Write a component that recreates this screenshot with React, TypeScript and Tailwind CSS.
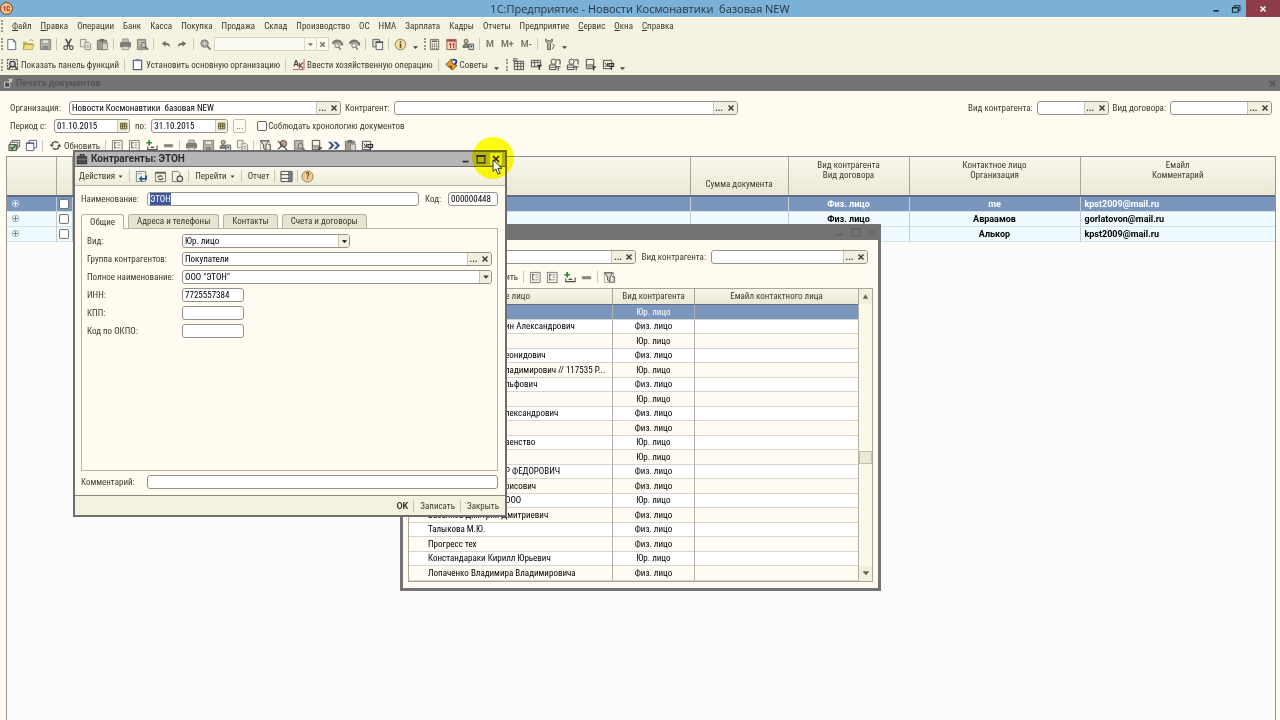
import React from "react";
import clsx from "clsx";

const icons: Record<string, React.ReactNode> = {
  file: (
    <>
      <path d="M3 1.5h6l2.5 2.5v8.5H3z" fill="#fff" stroke="#5f6b80" />
      <path d="M9 1.5V4h2.5" fill="none" stroke="#5f6b80" />
    </>
  ),
  open: (
    <>
      <path d="M1 4h4l1 1.5h6V12H1z" fill="#c9b45c" />
      <path d="M3 7h10l-2 5.5H1z" fill="#f0dc84" stroke="#a08c40" strokeWidth=".6" />
      <path d="M8 3c2-2 3-1 4 .5" fill="none" stroke="#8a8a6a" />
    </>
  ),
  save: (
    <>
      <path d="M1.5 1.5h11v11h-11z" fill="#b4b4aa" stroke="#7c7c74" />
      <path d="M3.5 2h7v4h-7z" fill="#e4e4d8" stroke="#7c7c74" strokeWidth=".6" />
      <path d="M4 8.5h6v4H4z" fill="#8a8a82" />
    </>
  ),
  cut: (
    <>
      <path d="M4 1l4.5 8M10 1L5.5 9" stroke="#444" strokeWidth="1.6" fill="none" />
      <circle cx="4" cy="10.5" r="2" fill="none" stroke="#555" strokeWidth="1.3" />
      <circle cx="10" cy="10.5" r="2" fill="none" stroke="#555" strokeWidth="1.3" />
    </>
  ),
  copy: (
    <>
      <path d="M1.5 1.5h6v8h-6z" fill="#ecebdf" stroke="#8c8c84" />
      <path d="M6.5 4.5h4l2 2v6h-6z" fill="#ecebdf" stroke="#8c8c84" />
      <path d="M8 8h3M8 10h3" stroke="#9c9c94" />
    </>
  ),
  paste: (
    <>
      <path d="M1.5 2.5h10v10h-10z" fill="#9c9c94" stroke="#74746c" />
      <path d="M4 1h5v3H4z" fill="#6c6c66" />
      <path d="M7 5.5h5.5v7H7z" fill="#d4d4ca" stroke="#8c8c84" />
    </>
  ),
  print: (
    <>
      <path d="M4 1h6v4H4z" fill="#c4c4bc" stroke="#777" strokeWidth=".7" />
      <path d="M1 6c0-1 1-2 2-2h8c1 0 2 1 2 2v4H1z" fill="#7e7e78" />
      <path d="M3.5 9h7v3.5h-7z" fill="#d8d8cc" stroke="#777" strokeWidth=".7" />
    </>
  ),
  preview: (
    <>
      <path d="M1.5 1.5h9v11h-9z" fill="#a4a49c" stroke="#84847c" />
      <path d="M3 4h5M3 6h4M3 8h4" stroke="#d8d8cc" />
      <circle cx="8" cy="7.5" r="2.7" fill="#c4c4bc" stroke="#666" />
      <path d="M10 9.5l3 3" stroke="#666" strokeWidth="1.6" />
    </>
  ),
  undo: <path d="M3 6l4-3v2c3 0 5 1 5 5-1-2-3-2.5-5-2.5V9.5z" fill="#6f6f68" />,
  redo: <path d="M11 6L7 3v2c-3 0-5 1-5 5 1-2 3-2.5 5-2.5V9.5z" fill="#6f6f68" />,
  find: (
    <>
      <circle cx="6" cy="6" r="4" fill="#a8a8a0" stroke="#77776f" />
      <path d="M9 9l3.5 3.5" stroke="#77776f" strokeWidth="2" />
      <path d="M4 6h4M6 4v4" stroke="#deded4" />
    </>
  ),
  findNext: (
    <>
      <path d="M1 6c1-5 9-6 11-1l1-1v4H9.5l1.2-1.2C9 3.5 4 4 3 7z" fill="#77776f" />
      <circle cx="6.5" cy="8" r="2.5" fill="#e0e0d4" stroke="#77776f" />
      <path d="M8.5 10l2 2.5" stroke="#77776f" strokeWidth="1.5" />
    </>
  ),
  windows: (
    <>
      <path d="M2 1.500h7v8H2z" fill="#dcdccf" stroke="#55606e" />
      <path d="M5.500 4.500h7v8h-7z" fill="#f6f5ea" stroke="#55606e" />
      <path d="M5 4.500h8" stroke="#444" strokeWidth="1.500" />
    </>
  ),
  info: (
    <>
      <circle cx="7" cy="7" r="5.7" fill="#f4dfa0" stroke="#8b7a4c" />
      <path d="M7 6v4.5M7 3.300v1.500" stroke="#4d4327" strokeWidth="1.6" />
    </>
  ),
  calc: (
    <>
      <path d="M2.500 1.500h9v11h-9z" fill="#eceadb" stroke="#6f6f60" />
      <path d="M4 3.500h6" stroke="#55554a" strokeWidth="1.500" />
      <path d="M4 6.500h6M4 8.700h6M4 11h6" stroke="#55554a" strokeWidth="1.200" strokeDasharray="1.300 1" />
    </>
  ),
  calendar: (
    <>
      <path d="M2 1.500h10v11H2z" fill="#f2dcc4" stroke="#8a5a44" />
      <path d="M2 3h10" stroke="#aa5040" strokeWidth="2" />
      <path d="M4.500 7L6 6v5M8 7l1.500-1v5" stroke="#b13a2c" fill="none" strokeWidth="1.200" />
    </>
  ),
  users: (
    <>
      <circle cx="4.500" cy="3.500" r="2.200" fill="#c9b48c" stroke="#666" />
      <path d="M1 10c0-5 7-5 7 0z" fill="#8a8a7c" stroke="#555" />
      <path d="M7.500 6.500h5v6h-5z" fill="#d6dce6" stroke="#555" />
      <circle cx="10" cy="9" r="1.200" fill="#555" />
    </>
  ),
  wrench: (
    <>
      <path d="M3 1v3l2 2v6.500h3V6l2-2V1L8 3H5z" fill="#b9b7a4" stroke="#5c5c50" />
      <path d="M10 6l2 2-2 4" stroke="#5c5c50" fill="none" />
    </>
  ),
  panel: (
    <>
      <path d="M1.500 1.500h11v11h-11z" fill="#e2e2d4" stroke="#444" strokeDasharray="2 1" />
      <circle cx="7" cy="6.500" r="3" fill="#c8ccd4" stroke="#333" strokeWidth="1.300" />
      <path d="M9 8.500l3.500 4M3 12l2-3" stroke="#333" strokeWidth="1.500" />
    </>
  ),
  org: (
    <>
      <path d="M2.500 2.500h9v10h-9z" fill="#fff" stroke="#55668a" strokeWidth="1.300" />
      <path d="M5 1h4v2.500H5z" fill="#7c88a0" />
    </>
  ),
  entry: (
    <>
      <path d="M1 12.500h12V1" fill="none" stroke="#b06060" />
      <path d="M2 9l2-6h1l1.500 6M2.500 7h3" stroke="#444" strokeWidth="1.300" fill="none" />
      <path d="M8 5v6M12 5L8.500 8l3.500 3" stroke="#8c3c3c" strokeWidth="1.300" fill="none" />
    </>
  ),
  tips: (
    <>
      <path d="M1 7l6-6 1 5 5 2-5 5z" fill="#e2a030" stroke="#7c4c18" />
      <path d="M8 2c3-1 5 1 4 3l-2 2" stroke="#2c3e90" strokeWidth="2" fill="none" />
      <path d="M4 8l4 1-1 3z" fill="#b03020" />
    </>
  ),
  pin: (
    <>
      <path d="M3 6h6v6H3z" fill="#4c4c4c" stroke="#ddd" />
      <path d="M8 2l4 4M12 2L8 6" stroke="#e8e0a0" strokeWidth="1.300" />
    </>
  ),
  ledger: (
    <>
      <path d="M2.500 3.500h10v9h-10z" fill="#f4f3e6" stroke="#444" />
      <path d="M2.500 6h10M2.500 9h10M6 3.500v9M9.500 3.500v9" stroke="#555" />
      <path d="M1 1h5M1 3h4" stroke="#444" />
    </>
  ),
  ledgerT: (
    <>
      <path d="M1.500 2.500h10v7h-10z" fill="#f4f3e6" stroke="#444" />
      <path d="M1.500 5h10M5 2.500v7M8 2.500v3" stroke="#555" />
      <path d="M7.500 8h5M10 8v5" stroke="#333" strokeWidth="1.400" />
    </>
  ),
  ledgerO: (
    <>
      <path d="M1.500 7.500h7v5h-7z" fill="#f4f3e6" stroke="#444" />
      <path d="M1.500 10h7" stroke="#555" />
      <circle cx="6" cy="4" r="2.800" fill="#f4f3e6" stroke="#444" />
      <path d="M8.500 9.500h5M11 9.500v4M9 2h4v5" stroke="#333" fill="none" />
    </>
  ),
  sheetT: (
    <>
      <path d="M2.500 1.500h8v10h-8z" fill="#f4f3e6" stroke="#444" />
      <path d="M2.500 7.500h8M4 9.500h3" stroke="#444" />
      <path d="M8 9.500h5M10.500 9.500v4" stroke="#333" strokeWidth="1.300" />
    </>
  ),
  sheetP: (
    <>
      <path d="M1.500 2.500h9v9h-9z" fill="#f4f3e6" stroke="#444" />
      <path d="M3 5l3 4M6 5v4M3 9h2" stroke="#333" />
      <path d="M7.500 6h5v3h-5zM10 9v4" stroke="#333" fill="none" strokeWidth="1.200" />
    </>
  ),
  docsOk: (
    <>
      <path d="M4.500 1.500h8v7h-8z" fill="#fff" stroke="#555" />
      <path d="M2.500 3.500h8v7h-8z" fill="#fff" stroke="#555" />
      <path d="M1 6h8v6.500H1z" fill="#b9c8b4" stroke="#444" />
      <path d="M2.500 8.500l2 2.500 4-5" stroke="#2e7a2a" strokeWidth="1.700" fill="none" />
    </>
  ),
  docs: (
    <>
      <path d="M4.500 1.500h8v8h-8z" fill="#fff" stroke="#55607c" />
      <path d="M1.500 4.500h8v8h-8z" fill="#fff" stroke="#55607c" />
      <path d="M1 4.500h9" stroke="#55607c" strokeWidth="1.500" />
    </>
  ),
  refresh: (
    <>
      <path d="M3 6a4 4 0 0 1 7-1.500M11 8a4 4 0 0 1-7 1.500" stroke="#55553c" strokeWidth="1.500" fill="none" />
      <path d="M.5 6h5L3 9zM8.500 8h5L11 5z" fill="#55553c" />
    </>
  ),
  list: (
    <>
      <path d="M1.500 1.500h10.500v11H1.500z" fill="#f8f7ee" stroke="#77776c" />
      <path d="M4 3v7M4 4h2M4 9.500h2" stroke="#55554c" />
      <path d="M7 4h3M7 6.500h3M7 9.500h3" stroke="#8a8a80" />
    </>
  ),
  add: (
    <>
      <path d="M4.500 1v6M1.500 4h6" stroke="#2e8a2a" strokeWidth="1.800" />
      <path d="M3 8v3.500h10V7" stroke="#4c4c3c" strokeWidth="1.200" fill="none" />
      <path d="M6 9h4" stroke="#4c4c3c" strokeWidth="1.500" />
    </>
  ),
  minus: <path d="M2.500 6h9v2.500h-9z" fill="#8c8c80" stroke="#66665c" strokeWidth=".6" />,
  filter: (
    <>
      <path d="M1.500 1.500h10v11h-10z" fill="#f4f3e6" stroke="#b0b0a4" />
      <path d="M1.500 2h9L7.500 6.500V12l-2.500-2V6.500z" fill="#dcdccf" stroke="#444" />
      <path d="M9.500 6h3v6h-4" stroke="#666" fill="none" />
    </>
  ),
  filterOff: (
    <>
      <circle cx="8" cy="5" r="3.500" fill="#c4a090" stroke="#444" />
      <path d="M2 2l10 10M2 11l5-4" stroke="#555" strokeWidth="1.400" />
    </>
  ),
  arrows: <path d="M1 3h3l4 4-4 4H1l4-4zM7 3h3l4 4-4 4H7l4-4z" fill="#34508a" />,
  saveIn: (
    <>
      <path d="M1.500 1.500h10v11h-10z" fill="#f0f0ea" stroke="#77808c" />
      <path d="M3 4h4" stroke="#8a96a8" />
      <path d="M4 9.500L7.500 6v2.500h3.500V6h2v4.500H7.500V13z" fill="#2c5a92" />
    </>
  ),
  reread: (
    <>
      <path d="M1.500 2.500h11v10h-11z" fill="#f0f0e4" stroke="#77776c" />
      <path d="M1.500 3h11" stroke="#66665c" strokeWidth="2" />
      <path d="M4 8a3 2.500 0 0 1 5-1M10 8.500a3 2.500 0 0 1-5 1" stroke="#444" strokeWidth="1.300" fill="none" />
    </>
  ),
  based: (
    <>
      <path d="M1.500 1.500h6l2 2v9h-8z" fill="#f4f4ec" stroke="#77776c" />
      <circle cx="9.500" cy="9.500" r="3" fill="#e8e8dc" stroke="#555" strokeWidth="1.300" />
      <path d="M9.500 5v2.500" stroke="#555" />
    </>
  ),
  report: (
    <>
      <path d="M1 1.500h12v11H1z" fill="#f6f5ea" stroke="#44444a" />
      <path d="M1 5h12M1 9h12M9.500 1.500v11" stroke="#44444a" />
      <path d="M10 2h3v10h-3z" fill="#77777c" />
    </>
  ),
  help: <circle cx="7" cy="7" r="6" fill="#efcf96" stroke="#94784c" />,
  grid: (
    <>
      <path d="M2 3h9v8H2z" fill="#fff" />
      <path d="M2 3h9v8H2zM2 5.500h9M2 8h9M5 3v8M8 3v8" stroke="#5f5420" strokeWidth="1.300" fill="none" />
    </>
  ),
  expand: (
    <>
      <circle cx="7" cy="7" r="3.500" fill="none" stroke="currentColor" strokeWidth=".6" />
      <path d="M4.500 7h5M7 4.500v5" stroke="currentColor" />
    </>
  ),
  briefcase: (
    <>
      <path d="M5 4V2h4v2" fill="none" stroke="#333" strokeWidth="1.500" />
      <path d="M1.500 4h11v8.500h-11z" fill="#4c4c4c" stroke="#2c2c2c" />
      <path d="M1.500 7.500h11" stroke="#7c7c7c" />
    </>
  ),
  x: <path d="M3.500 3.500l7 7M10.500 3.500l-7 7" stroke="currentColor" strokeWidth="2" />,
  down: <path d="M3 5h8L7 9.500z" fill="currentColor" />,
  up: <path d="M3.500 10L7 4l3.500 6z" fill="currentColor" />,
  min: <path d="M3 10h7" stroke="currentColor" strokeWidth="2" />,
  max: (
    <>
      <path d="M2.500 3h9v8.500h-9z" fill="none" stroke="currentColor" strokeWidth="1.300" />
      <path d="M2 3.500h10" stroke="currentColor" strokeWidth="2" />
    </>
  ),
  restore: (
    <path d="M4.500 5V2.500h8V9h-2M2 5h8v6.500H2zM2 5.500h8" fill="none" stroke="currentColor" strokeWidth="1.500" />
  ),
};

function Icon({ name, className = "h-[13px] w-[13px]" }: { name: string; className?: string }) {
  return (
    <svg viewBox="0 0 14 14" className={clsx("shrink-0", className)} aria-hidden="true">
      {icons[name]}
    </svg>
  );
}

function IconButton({ name, label }: { name: string; label: string }) {
  return (
    <button aria-label={label} className="flex h-[16px] w-[17px] shrink-0 items-center justify-center">
      <Icon name={name} />
    </button>
  );
}

const Sep = () => <div className="mr-[3px] ml-[2px] h-[12px] w-px shrink-0 bg-[#c9c7b4]" />;

const Grip = () => <div className="h-[12px] w-[2px] shrink-0 border-l-2 border-dotted border-[#9a9888]" />;

const More = () => (
  <button aria-label="Ещё" className="mr-[3px] flex h-[16px] w-[12px] shrink-0 items-end justify-center text-[#44443a]">
    <Icon name="down" className="h-[9px] w-[9px]" />
  </button>
);

function TextButton({ icon, children }: { icon?: string; children: React.ReactNode }) {
  return (
    <button className="flex h-[16px] shrink-0 items-center gap-[2px] px-[3px] whitespace-nowrap">
      {icon && <Icon name={icon} />}
      {children}
    </button>
  );
}

interface FieldProps {
  id: string;
  label?: string;
  value?: string;
  className?: string;
  buttons?: string[];
  selected?: boolean;
}

// Text box with its label and the small buttons built into its right edge
function Field({ id, label, value = "", className, buttons = [], selected }: FieldProps) {
  return (
    <>
      {label && (
        <label htmlFor={id} className="shrink-0 whitespace-nowrap">
          {label}
        </label>
      )}
      <div
        className={clsx(
          "flex h-[14px] overflow-hidden rounded-[3px] border border-[#96948a] bg-white text-black",
          className,
        )}
      >
        <input
          id={id}
          defaultValue={value}
          autoFocus={selected}
          onFocus={(e) => selected && e.currentTarget.select()}
          className="w-full min-w-0 flex-1 bg-transparent pl-[2px] outline-none selection:bg-[#40569c] selection:text-white"
        />
        {buttons.map((b, i) => (
          <button
            key={b}
            aria-label={`${b}: ${label ?? id}`}
            className={clsx(
              "flex w-[12px] shrink-0 items-center justify-center bg-[#f1f0e0] text-[#3c3c30]",
              i === 0 && "border-l border-[#c9c7b4]",
            )}
          >
            {b === "select" ? <span className="leading-none font-bold">...</span> : <Icon name={b} className="h-[10px] w-[10px]" />}
          </button>
        ))}
      </div>
    </>
  );
}

const menu = [
  "Файл", "Правка", "Операции", "Банк", "Касса", "Покупка", "Продажа", "Склад", "Производство",
  "ОС", "НМА", "Зарплата", "Кадры", "Отчеты", "Предприятие", "Сервис", "Окна", "Справка",
];
const underlined = ["Файл", "Правка", "Сервис", "Окна", "Справка"];

const documents = [
  { kind: "Физ. лицо", contact: "me", email: "kpst2009@mail.ru" },
  { kind: "Физ. лицо", contact: "Авраамов", email: "gorlatovon@mail.ru" },
  { kind: "", contact: "Алькор", email: "kpst2009@mail.ru" },
];

// tail: only the end of the name shows from behind the card window
const contractors = [
  { name: "", kind: "Юр. лицо" },
  { name: "ин Александрович", kind: "Физ. лицо", tail: true },
  { name: "", kind: "Юр. лицо" },
  { name: "еонидович", kind: "Физ. лицо", tail: true },
  { name: "ладимирович // 117535 Р...", kind: "Юр. лицо", tail: true },
  { name: "льфович", kind: "Физ. лицо", tail: true },
  { name: "", kind: "Юр. лицо" },
  { name: "лександрович", kind: "Физ. лицо", tail: true },
  { name: "", kind: "Физ. лицо" },
  { name: "венство", kind: "Юр. лицо", tail: true },
  { name: "", kind: "Юр. лицо" },
  { name: "Р ФЕДОРОВИЧ", kind: "Физ. лицо", tail: true },
  { name: "рисович", kind: "Физ. лицо", tail: true },
  { name: "ООО", kind: "Юр. лицо", tail: true },
  { name: "Васенков Дмитрий Дмитриевич", kind: "Физ. лицо" },
  { name: "Талыкова М.Ю.", kind: "Физ. лицо" },
  { name: "Прогресс тех", kind: "Физ. лицо" },
  { name: "Констандараки Кирилл Юрьевич", kind: "Юр. лицо" },
  { name: "Лопаченко Владимира Владимировича", kind: "Физ. лицо" },
];

function MainHeader() {
  return (
    <header className="bg-[#f4f2e1]">
      <div className="grid h-[17px] grid-cols-[1fr_auto_1fr] items-center bg-[#7bb1d6]">
        <div className="flex h-[13px] w-[13px] items-center justify-center rounded-full border border-[#8c3c10] bg-[#f6c08c] text-[7px] font-bold text-[#b02810]">
          1С
        </div>
        <h1 className="font-['Open_Sans',sans-serif] text-[11px] font-medium whitespace-pre text-[#26353f]">
          1С:Предприятие - Новости Космонавтики  базовая NEW
        </h1>
        <div className="flex h-full justify-end text-[#1c2c38]">
          <button aria-label="Свернуть" className="flex w-[20px] items-center justify-center">
            <Icon name="min" className="h-[11px] w-[11px]" />
          </button>
          <button aria-label="Восстановить" className="flex w-[20px] items-center justify-center">
            <Icon name="restore" className="h-[10px] w-[10px]" />
          </button>
          <button aria-label="Закрыть" className="flex w-[34px] items-center justify-center bg-[#8e3b4a] text-white">
            <Icon name="x" className="h-[10px] w-[10px]" />
          </button>
        </div>
      </div>
      <nav className="flex h-[17px] items-center gap-[9px] border-t border-white pl-px">
        <Grip />
        {menu.map((item) => (
          <button key={item} className={clsx(underlined.includes(item) && "first-letter:underline")}>
            {item}
          </button>
        ))}
      </nav>
      <div className="flex h-[20px] items-center pl-px">
        <Grip />
        <IconButton name="file" label="Новый" />
        <IconButton name="open" label="Открыть" />
        <IconButton name="save" label="Сохранить" />
        <Sep />
        <IconButton name="cut" label="Вырезать" />
        <IconButton name="copy" label="Копировать" />
        <IconButton name="paste" label="Вставить" />
        <Sep />
        <IconButton name="print" label="Печать" />
        <IconButton name="preview" label="Просмотр" />
        <Sep />
        <IconButton name="undo" label="Отменить" />
        <IconButton name="redo" label="Вернуть" />
        <Sep />
        <IconButton name="find" label="Найти" />
        <div className="flex h-[14px] w-[115px] border border-[#d6d4c4] bg-[#fbfaf0] text-[#6c6c60]">
          <input aria-label="Поиск" className="min-w-0 flex-1 bg-transparent outline-none" />
          <button aria-label="Список" className="flex w-[12px] items-center justify-center border-l border-[#d6d4c4]">
            <Icon name="down" className="h-[9px] w-[9px]" />
          </button>
          <button aria-label="Очистить" className="flex w-[12px] items-center justify-center border-l border-[#d6d4c4]">
            <Icon name="x" className="h-[9px] w-[9px]" />
          </button>
        </div>
        <IconButton name="findNext" label="Найти далее" />
        <IconButton name="findNext" label="Найти назад" />
        <Sep />
        <IconButton name="windows" label="Окна" />
        <Sep />
        <IconButton name="info" label="Справка" />
        <More />
        <Grip />
        <IconButton name="calc" label="Калькулятор" />
        <IconButton name="calendar" label="Календарь" />
        <IconButton name="users" label="Пользователи" />
        <Sep />
        <div className="flex gap-[7px] px-[3px] font-['Roboto',sans-serif] font-bold text-[#77776c]">
          <button>M</button>
          <button>M+</button>
          <button>M-</button>
        </div>
        <Sep />
        <IconButton name="wrench" label="Сервис" />
        <More />
      </div>
      <div className="flex h-[21px] items-center pl-px">
        <Grip />
        <TextButton icon="panel">Показать панель функций</TextButton>
        <Sep />
        <TextButton icon="org">Установить основную организацию</TextButton>
        <Sep />
        <TextButton icon="entry">Ввести хозяйственную операцию</TextButton>
        <Sep />
        <TextButton icon="tips">Советы</TextButton>
        <More />
        <Grip />
        <div className="flex gap-px pl-[2px]">
          <IconButton name="ledger" label="Оборотно-сальдовая ведомость" />
          <IconButton name="ledgerT" label="Шахматка" />
          <IconButton name="ledgerO" label="Ведомость по счету" />
          <IconButton name="ledgerO" label="Обороты счета" />
          <IconButton name="sheetT" label="Анализ счета" />
          <IconButton name="sheetP" label="Карточка счета" />
        </div>
        <More />
      </div>
    </header>
  );
}

function DocumentsWindow() {
  return (
    <section className="flex flex-1 flex-col bg-[#fffbf0]">
      <div className="flex h-[16px] items-center justify-between bg-[#737373] px-[2px] text-[#555]">
        <div className="flex items-center gap-[2px]">
          <Icon name="pin" className="h-[12px] w-[12px]" />
          <h2 className="font-['Roboto',sans-serif] font-bold">Печать документов</h2>
        </div>
        <button aria-label="Закрыть окно">
          <Icon name="x" className="h-[11px] w-[11px]" />
        </button>
      </div>
      <div className="flex items-center gap-[4px] pt-[10px] pr-[8px] pl-[10px]">
        <div className="w-[55px]">
          <label htmlFor="org">Организация:</label>
        </div>
        <Field id="org" value="Новости Космонавтики  базовая NEW" className="w-[272px]" buttons={["select", "x"]} />
        <Field id="contractor" label="Контрагент:" className="w-[344px]" buttons={["select", "x"]} />
        <div className="flex-1" />
        <Field id="kind" label="Вид контрагента:" className="w-[72px]" buttons={["select", "x"]} />
        <Field id="contract" label="Вид договора:" className="w-[102px]" buttons={["select", "x"]} />
      </div>
      <div className="flex items-center gap-[5px] pt-[4px] pl-[10px]">
        <div className="w-[39px] whitespace-nowrap">
          <label htmlFor="from">Период с:</label>
        </div>
        <Field id="from" value="01.10.2015" className="w-[76px]" buttons={["grid"]} />
        <Field id="to" label="по:" value="31.10.2015" className="w-[77px]" buttons={["grid"]} />
        <button aria-label="Выбрать период" className="h-[14px] w-[13px] rounded-[2px] border border-[#c0beae] leading-[8px]">
          ...
        </button>
        <label className="ml-[6px] flex items-center gap-px">
          <input type="checkbox" className="h-[10px] w-[10px] appearance-none rounded-[2px] border border-[#66645a] bg-white" />
          Соблюдать хронологию документов
        </label>
      </div>
      <div className="flex h-[23px] items-center pt-[2px] pl-[6px]">
        <IconButton name="docsOk" label="Провести" />
        <IconButton name="docs" label="Документы" />
        <Sep />
        <TextButton icon="refresh">Обновить</TextButton>
        <Sep />
        <IconButton name="list" label="Развернуть" />
        <IconButton name="list" label="Свернуть группы" />
        <IconButton name="add" label="Добавить" />
        <IconButton name="minus" label="Удалить" />
        <Sep />
        <IconButton name="print" label="Печать списка" />
        <IconButton name="save" label="Сохранить список" />
        <IconButton name="users" label="Контакты" />
        <IconButton name="copy" label="Скопировать" />
        <Sep />
        <IconButton name="filter" label="Отбор" />
        <IconButton name="filterOff" label="Снять отбор" />
        <IconButton name="preview" label="Просмотр списка" />
        <IconButton name="sheetT" label="Отчет" />
        <IconButton name="arrows" label="Перейти далее" />
        <IconButton name="paste" label="Буфер" />
        <IconButton name="sheetP" label="Настройка" />
      </div>
      <div className="mr-[4px] ml-[6px] flex-1 border border-b-0 border-[#96948a] bg-[#fcfcfc]">
        <table className="w-full table-fixed border-collapse">
          <colgroup>
            <col className="w-[49px]" />
            <col className="w-[16px]" />
            <col />
            <col className="w-[98px]" />
            <col className="w-[121px]" />
            <col className="w-[171px]" />
            <col className="w-[195px]" />
          </colgroup>
          <thead>
            <tr className="h-[39px] bg-linear-to-b from-[#f8f7ee] to-[#eae8d2] align-top leading-[10px] [&>th]:border-r [&>th]:border-[#a8a698] [&>th]:pt-[3px] [&>th]:font-normal [&>th:last-child]:border-r-0">
              <th />
              <th />
              <th />
              <th className="align-bottom pb-[6px]">Сумма документа</th>
              <th>
                Вид контрагента
                <br />
                Вид договора
              </th>
              <th>
                Контактное лицо
                <br />
                Организация
              </th>
              <th>
                Емайл
                <br />
                Комментарий
              </th>
            </tr>
          </thead>
          <tbody className="font-['Roboto',sans-serif] leading-[12px] font-bold text-black">
            {documents.map((doc, i) => (
              <tr
                key={i}
                className={clsx(
                  "h-[15px] border-b border-[#d4e0e4] text-center [&>td]:border-r [&>td]:border-[#c4ccd0] [&>td]:p-0 [&>td:last-child]:border-r-0",
                  i === 0 ? "border-t-2 border-t-[#5c6c88] bg-[#7b96bd] text-white" : "bg-[#effbff]",
                )}
              >
                <td>
                  <button aria-label="Развернуть строку" className={clsx("ml-[2px] block", i > 0 && "text-[#77776c]")}>
                    <Icon name="expand" />
                  </button>
                </td>
                <td>
                  <input
                    type="checkbox"
                    aria-label={`Отметить ${doc.contact}`}
                    className="mx-auto block h-[10px] w-[10px] appearance-none rounded-[2px] border border-[#77756a] bg-white"
                  />
                </td>
                <td />
                <td />
                <td>{doc.kind}</td>
                <td>{doc.contact}</td>
                <td className="text-left">
                  <span className="pl-[4px]">{doc.email}</span>
                </td>
              </tr>
            ))}
          </tbody>
        </table>
      </div>
    </section>
  );
}

function ContractorsWindow() {
  return (
    <section className="absolute top-[224px] left-[400px] h-[367px] w-[481px] border-[3px] border-t-0 border-[#737373] bg-[#fffbf0]">
      <div className="flex h-[16px] items-center justify-end gap-[4px] bg-[#737373] text-[#606060]">
        <Icon name="min" className="h-[12px] w-[12px]" />
        <Icon name="max" className="h-[12px] w-[12px]" />
        <Icon name="x" className="h-[12px] w-[12px]" />
      </div>
      <div className="flex items-center justify-end gap-[5px] pt-[10px] pr-[10px]">
        <Field id="listContact" className="w-[180px]" buttons={["select", "x"]} />
        <Field id="listKind" label="Вид контрагента:" className="w-[157px]" buttons={["select", "x"]} />
      </div>
      <div className="flex h-[24px] items-center pt-[2px] pl-[61px]">
        <TextButton icon="refresh">Обновить</TextButton>
        <Sep />
        <IconButton name="list" label="Развернуть список" />
        <IconButton name="list" label="Свернуть список" />
        <IconButton name="add" label="Добавить контрагента" />
        <IconButton name="minus" label="Удалить контрагента" />
        <Sep />
        <IconButton name="filter" label="Отбор контрагентов" />
      </div>
      <div className="mr-[5px] ml-[5px] flex border border-[#a8a698]">
        <div className="flex-1">
          <table className="w-full table-fixed border-collapse leading-[12px] text-black">
            <colgroup>
              <col />
              <col className="w-[82px]" />
              <col className="w-[164px]" />
            </colgroup>
            <thead>
              <tr className="h-[15px] bg-linear-to-b from-[#f8f7ee] to-[#eae8d2] text-[#3c3a2c] [&>th]:border-r [&>th]:border-[#a8a698] [&>th]:p-0 [&>th]:font-normal">
                <th className="text-left">
                  <span className="pl-[57px]">Контактное лицо</span>
                </th>
                <th>Вид контрагента</th>
                <th>Емайл контактного лица</th>
              </tr>
            </thead>
            <tbody>
              {contractors.map((row, i) => (
                <tr
                  key={i}
                  className={clsx(
                    "border-b border-[#d6d4cc] odd:h-[15px] even:h-[14px] [&>td]:border-r [&>td]:border-[#b4b2a8] [&>td]:p-0",
                    i === 0 ? "border-t border-t-[#5c6c88] bg-[#7b96bd] text-white" : "even:bg-white odd:bg-[#fffbf2]",
                  )}
                >
                  <td className="whitespace-nowrap">
                    <span className={row.tail ? "pl-[96px]" : "pl-[19px]"}>{row.name}</span>
                  </td>
                  <td className="text-center">{row.kind}</td>
                  <td />
                </tr>
              ))}
            </tbody>
          </table>
        </div>
        <div className="flex w-[13px] shrink-0 flex-col items-center bg-[#fbf9ec] text-[#66645a]">
          <button aria-label="Вверх" className="flex h-[15px] w-full items-center justify-center bg-[#f1f0e0]">
            <Icon name="up" className="h-[11px] w-[11px]" />
          </button>
          <div className="mt-[147px] h-[13px] w-full border border-[#c4c2b0] bg-[#ebe9d6]" />
          <button aria-label="Вниз" className="mt-auto flex h-[15px] w-full items-center justify-center bg-[#f1f0e0]">
            <Icon name="down" className="h-[12px] w-[12px]" />
          </button>
        </div>
      </div>
    </section>
  );
}

const tabs = ["Общие", "Адреса и телефоны", "Контакты", "Счета и договоры"];

function FormRow({ id, label, children }: { id: string; label: string; children: React.ReactNode }) {
  return (
    <div className="flex h-[14px] items-center">
      <label htmlFor={id} className="w-[95px] shrink-0 whitespace-nowrap">
        {label}
      </label>
      {children}
    </div>
  );
}

function ContractorCard() {
  return (
    <section className="absolute top-[150px] left-[73px] flex h-[367px] w-[434px] flex-col border-2 border-[#6e6e6e] bg-[#fffbf0]">
      <div className="flex h-[15px] items-center gap-[3px] border-b border-[#6e6e6e] bg-[#b6b6b6] pl-px text-[#2c2c2c]">
        <Icon name="briefcase" className="h-[12px] w-[12px]" />
        <h2 className="flex-1 font-['Roboto',sans-serif] text-[10px] font-bold">Контрагенты: ЭТОН</h2>
        <div className="flex gap-[3px] pr-[3px]">
          <button aria-label="Свернуть карточку">
            <Icon name="min" className="h-[12px] w-[12px]" />
          </button>
          <button aria-label="Развернуть карточку">
            <Icon name="max" className="h-[12px] w-[12px]" />
          </button>
          <button aria-label="Закрыть карточку" className="bg-[#ecec9c]">
            <Icon name="x" className="h-[12px] w-[12px]" />
          </button>
        </div>
      </div>
      <div className="flex h-[19px] items-center border-b border-[#b4b2a4] bg-linear-to-b from-[#faf9ee] to-[#efedda] pl-px">
        <TextButton>
          Действия
          <Icon name="down" className="h-[7px] w-[7px]" />
        </TextButton>
        <Sep />
        <IconButton name="saveIn" label="Записать и закрыть" />
        <div className="w-[2px]" />
        <IconButton name="reread" label="Перечитать" />
        <IconButton name="based" label="Ввести на основании" />
        <Sep />
        <TextButton>
          Перейти
          <Icon name="down" className="h-[7px] w-[7px]" />
        </TextButton>
        <Sep />
        <TextButton>Отчет</TextButton>
        <Sep />
        <IconButton name="report" label="Список" />
        <Sep />
        <button aria-label="Справка по карточке" className="grid place-items-center font-bold text-[#6c4c20]">
          <Icon name="help" className="col-start-1 row-start-1 h-[13px] w-[13px]" />
          <span className="col-start-1 row-start-1">?</span>
        </button>
      </div>
      <div className="flex items-center pt-[6px] pr-[7px] pl-[6px]">
        <label htmlFor="name" className="w-[66px] shrink-0">
          Наименование:
        </label>
        <Field id="name" value="ЭТОН" className="flex-1" selected />
        <label htmlFor="code" className="w-[29px] pl-[6px]">
          Код:
        </label>
        <Field id="code" value="000000448" className="w-[50px]" />
      </div>
      <div role="tablist" className="mt-[8px] flex h-[14px] gap-[4px] pl-[6px]">
        {tabs.map((tab, i) => (
          <button
            key={tab}
            role="tab"
            aria-selected={i === 0}
            className={clsx(
              "rounded-t-[3px] border border-b-0 border-[#b4b2a4] px-[8px] leading-[13px]",
              i === 0 ? "relative -mb-px bg-[#fffbf0]" : "bg-[#e6e3d0]",
            )}
          >
            {tab}
          </button>
        ))}
      </div>
      <div className="mr-[7px] ml-[6px] flex flex-1 flex-col gap-[4px] border border-[#b4b2a4] pt-[5px] pr-[5px] pl-[5px]">
        <FormRow id="type" label="Вид:">
          <div className="relative w-[168px] text-black">
            <select
              id="type"
              className="block h-[14px] w-full appearance-none rounded-[3px] border border-[#96948a] bg-white pl-[2px] leading-[11px] outline-none"
            >
              <option>Юр. лицо</option>
            </select>
            <div className="pointer-events-none absolute top-px right-px flex h-[12px] w-[11px] items-center justify-center border-l border-[#c9c7b4] bg-[#f1f0e0]">
              <Icon name="down" className="h-[9px] w-[9px]" />
            </div>
          </div>
        </FormRow>
        <FormRow id="group" label="Группа контрагентов:">
          <Field id="group" value="Покупатели" className="flex-1" buttons={["select", "x"]} />
        </FormRow>
        <FormRow id="fullName" label="Полное наименование:">
          <Field id="fullName" value={'ООО "ЭТОН"'} className="flex-1" buttons={["down"]} />
        </FormRow>
        <FormRow id="inn" label="ИНН:">
          <Field id="inn" value="7725557384" className="w-[62px]" />
        </FormRow>
        <FormRow id="kpp" label="КПП:">
          <Field id="kpp" className="w-[62px]" />
        </FormRow>
        <FormRow id="okpo" label="Код по ОКПО:">
          <Field id="okpo" className="w-[62px]" />
        </FormRow>
      </div>
      <div className="flex items-center pt-[4px] pr-[7px] pb-[6px] pl-[6px]">
        <label htmlFor="comment" className="w-[66px] shrink-0">
          Комментарий:
        </label>
        <Field id="comment" className="flex-1" />
      </div>
      <div className="flex h-[20px] items-center justify-end border-t border-[#8c8a7e] bg-[#f3f1e0] pr-[3px]">
        <button className="px-[3px] font-['Roboto',sans-serif] font-bold">OK</button>
        <Sep />
        <TextButton>Записать</TextButton>
        <Sep />
        <TextButton>Закрыть</TextButton>
      </div>
    </section>
  );
}

export default function App() {
  return (
    <div className="relative flex min-h-screen flex-col overflow-hidden font-['Roboto_Condensed','Roboto',sans-serif] text-[9px] leading-[12px] text-[#3c3a2c]">
      <MainHeader />
      <DocumentsWindow />
      <ContractorsWindow />
      <ContractorCard />
      {/* Click highlight and mouse pointer */}
      <div className="pointer-events-none absolute top-[137px] left-[472px] h-[42px] w-[42px] rounded-full bg-[#ffff10] mix-blend-multiply" />
      <svg viewBox="0 0 12 18" className="pointer-events-none absolute top-[159px] left-[492px] h-[16px] w-[11px]">
        <path d="M1 1v13l3-3 2.500 6 2.500-1-2.500-5.500H11z" fill="#fff" stroke="#222" />
      </svg>
    </div>
  );
}
